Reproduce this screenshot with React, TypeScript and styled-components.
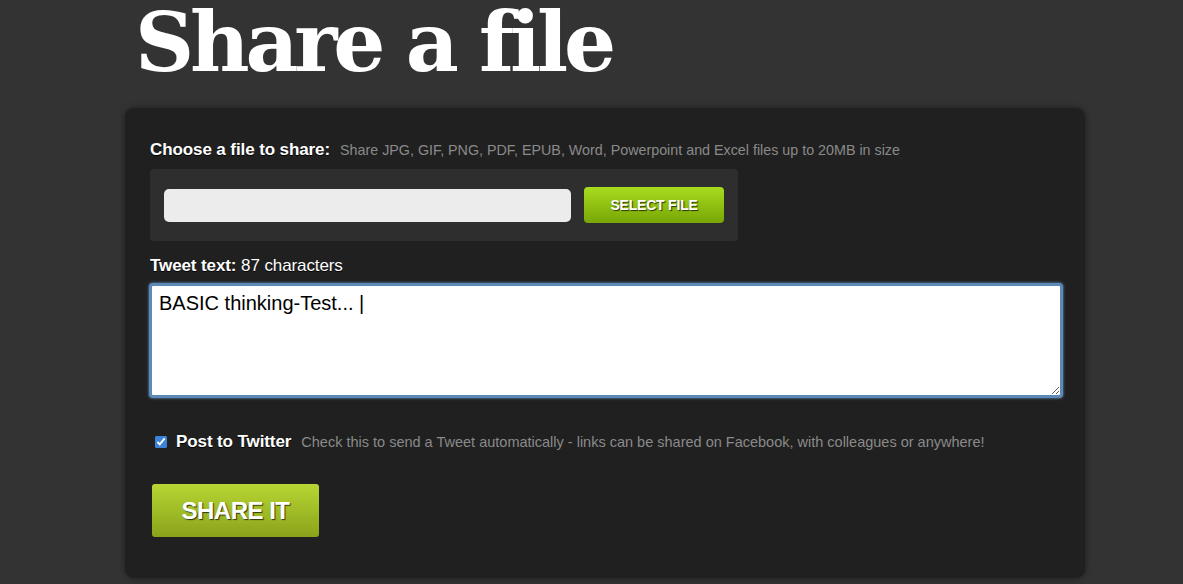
import React from "react";
import styled, { createGlobalStyle } from "styled-components";

const GlobalStyle = createGlobalStyle`
  html, body {
    margin: 0;
    padding: 0;
    background: #333333;
    font-family: "Liberation Sans", Arial, sans-serif;
    overflow: hidden;
  }
`;

const Page = styled.div`
  width: 1183px;
  height: 584px;
  overflow: hidden;
  padding-left: 125px;
  box-sizing: border-box;
`;

const Title = styled.h1`
  margin: 0;
  padding-left: 10px;
  height: 108px;
  font-family: "DejaVu Serif", serif;
  font-weight: 700;
  font-size: 82px;
  line-height: 84px;
  letter-spacing: -4.2px;
  color: #ffffff;
`;

const Panel = styled.div`
  width: 960px;
  height: 470px;
  box-sizing: border-box;
  background: #202020;
  border-radius: 9px;
  box-shadow: 0 0 6px rgba(0, 0, 0, 0.45);
  padding: 32px 23px 0 25px;
`;

const LabelRow = styled.div`
  display: flex;
  align-items: baseline;
  gap: 10px;
  height: 22px;
`;

const Label = styled.span`
  color: #ffffff;
  font-weight: 700;
  font-size: 17px;
  letter-spacing: -0.1px;
  text-shadow: 0 1px 0 #000;
`;

const Hint = styled.span`
  color: #8a8a8a;
  font-size: 14.3px;
`;

const Plain = styled.span`
  font-weight: 400;
`;

const FileBox = styled.div`
  margin-top: 7px;
  width: 588px;
  height: 72px;
  box-sizing: border-box;
  background: #2e2e2e;
  border-radius: 4px;
  display: flex;
  align-items: center;
  padding: 0 14px;
  gap: 13px;
`;

const FileInput = styled.div`
  width: 407px;
  height: 33px;
  background: #ececec;
  border-radius: 5px;
`;

const GreenButton = styled.button<{ $big?: boolean }>`
  border: none;
  cursor: pointer;
  font-family: "Liberation Sans", Arial, sans-serif;
  font-weight: 700;
  color: #ffffff;
  text-transform: uppercase;
  border-radius: ${(p) => (p.$big ? "3px" : "4px")};
  width: ${(p) => (p.$big ? "167px" : "140px")};
  height: ${(p) => (p.$big ? "53px" : "36px")};
  font-size: ${(p) => (p.$big ? "24px" : "14px")};
  letter-spacing: ${(p) => (p.$big ? "-0.5px" : "-0.2px")};
  text-shadow: 1px 1px 1px rgba(0, 0, 0, 0.7);
  background: ${(p) =>
    p.$big
      ? "linear-gradient(#b7d634, #8aa31a)"
      : "linear-gradient(#a8dc1e, #78a606)"};
`;

const TweetLabel = styled(LabelRow)`
  margin-top: 15px;
`;

const TextArea = styled.textarea`
  display: block;
  margin-top: 5px;
  margin-left: -1px;
  width: 914px;
  height: 115px;
  box-sizing: border-box;
  border: 3px solid #5b89b8;
  border-radius: 4px;
  box-shadow: 0 0 3px #6d9bd0;
  padding: 6px 7px 4px;
  font-family: "Liberation Sans", Arial, sans-serif;
  font-size: 20px;
  color: #000;
  background: #fff;
  outline: none;
  resize: vertical;
`;

const CheckRow = styled.label`
  display: flex;
  align-items: center;
  margin-top: 34px;
  margin-left: 5px;
  gap: 9px;
  height: 20px;
`;

const Check = styled.input`
  width: 12px;
  height: 12px;
  margin: 0;
  accent-color: #3b82d9;
`;

const CheckHint = styled(Hint)`
  margin-left: 1px;
  font-size: 14.5px;
`;

const ShareRow = styled.div`
  margin-top: 32px;
  margin-left: 2px;
`;

export default function App() {
  return (
    <>
      <GlobalStyle />
      <Page>
        <Title>Share a file</Title>
        <Panel>
          <LabelRow>
            <Label>Choose a file to share:</Label>
            <Hint>
              Share JPG, GIF, PNG, PDF, EPUB, Word, Powerpoint and Excel files up to 20MB in size
            </Hint>
          </LabelRow>
          <FileBox>
            <FileInput />
            <GreenButton>Select file</GreenButton>
          </FileBox>
          <TweetLabel>
            <Label>
              Tweet text: <Plain>87 characters</Plain>
            </Label>
          </TweetLabel>
          <TextArea defaultValue="BASIC thinking-Test... |" />
          <CheckRow>
            <Check type="checkbox" defaultChecked />
            <Label>Post to Twitter</Label>
            <CheckHint>
              Check this to send a Tweet automatically - links can be shared on Facebook, with colleagues or anywhere!
            </CheckHint>
          </CheckRow>
          <ShareRow>
            <GreenButton $big>Share it</GreenButton>
          </ShareRow>
        </Panel>
      </Page>
    </>
  );
}
